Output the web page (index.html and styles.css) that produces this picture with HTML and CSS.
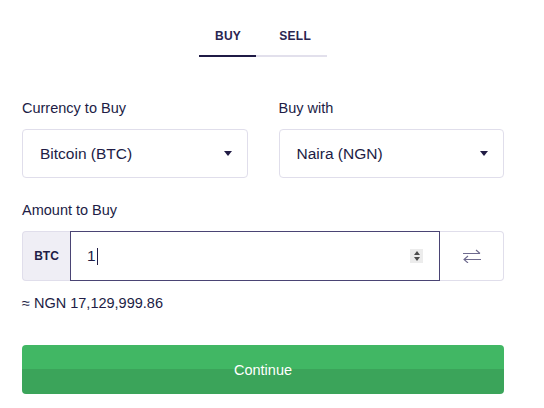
FILE: index.html
```html
<!DOCTYPE html>
<html lang="en">
<head>
  <meta charset="UTF-8">
  <title>Buy / Sell</title>
  <link rel="stylesheet" href="styles.css">
</head>
<body>
  <div class="trade">
    <div class="tabs">
      <span class="tab active">BUY</span>
      <span class="tab">SELL</span>
    </div>

    <div class="row">
      <div class="field">
        <label>Currency to Buy</label>
        <div class="select">
          <span>Bitcoin (BTC)</span>
          <i class="caret"></i>
        </div>
      </div>
      <div class="field">
        <label>Buy with</label>
        <div class="select">
          <span>Naira (NGN)</span>
          <i class="caret"></i>
        </div>
      </div>
    </div>

    <div class="field">
      <label>Amount to Buy</label>
      <div class="amount">
        <span class="addon">BTC</span>
        <div class="amount-input">
          <span class="value">1</span><i class="cursor"></i>
          <span class="spin">
            <i class="up"></i>
            <i class="down"></i>
          </span>
        </div>
        <button class="swap" type="button">
          <svg width="20" height="14" viewBox="0 0 20 14" fill="none" stroke="#6e6a8e" stroke-width="1.1">
            <path d="M1 4.5h17M14 1l4 3.5"/>
            <path d="M19 10.5H2M6 14l-4-3.5L6 7"/>
          </svg>
        </button>
      </div>
    </div>

    <p class="estimate">&asymp; NGN 17,129,999.86</p>

    <button class="continue" type="button">Continue</button>
  </div>
</body>
</html>
```

FILE: styles.css
```css
body {
  margin: 0;
  font-family: "Liberation Sans", Arial, sans-serif;
  color: #211c45;
  background: #fff;
}

.trade {
  width: 482px;
  margin-left: 22px;
  padding-top: 29px;
}

.tabs {
  display: flex;
  justify-content: center;
  margin-bottom: 43px;
}

.tab {
  font-size: 12px;
  font-weight: bold;
  letter-spacing: 0.3px;
  color: #2a2550;
  padding: 0 15px 12px 16px;
  border-bottom: 2px solid #e2e0ec;
}

.tab + .tab {
  padding: 0 16px 12px 23px;
}

.tab.active {
  border-bottom-color: #1f1a45;
}

.row {
  display: flex;
  gap: 31px;
  margin-bottom: 24px;
}

.row .field {
  flex: 1;
}

label {
  display: block;
  font-size: 14.5px;
  margin-bottom: 13px;
}

.select {
  display: flex;
  align-items: center;
  justify-content: space-between;
  height: 47px;
  padding: 0 15px 0 17px;
  border: 1px solid #e0deeb;
  border-radius: 4px;
  font-size: 15.5px;
}

.caret {
  width: 0;
  height: 0;
  border-left: 4.5px solid transparent;
  border-right: 4.5px solid transparent;
  border-top: 5px solid #211c45;
}

.amount {
  display: flex;
  height: 50px;
}

.addon {
  display: flex;
  align-items: center;
  justify-content: center;
  width: 47px;
  background: #efeef5;
  border: 1px solid #e0deeb;
  border-right: none;
  border-radius: 4px 0 0 4px;
  font-size: 12px;
  font-weight: bold;
}

.amount-input {
  flex: 1;
  display: flex;
  align-items: center;
  padding: 0 16px;
  border: 1px solid #4a4474;
  font-size: 15.5px;
}

.cursor {
  width: 1px;
  height: 17px;
  background: #211c45;
  margin-left: 1px;
}

.spin {
  margin-left: auto;
  width: 13px;
  height: 14px;
  background: #ececec;
  display: flex;
  flex-direction: column;
  align-items: center;
  justify-content: center;
  gap: 2px;
}

.spin .up {
  border-left: 3.5px solid transparent;
  border-right: 3.5px solid transparent;
  border-bottom: 4px solid #4d4d4d;
}

.spin .down {
  border-left: 3.5px solid transparent;
  border-right: 3.5px solid transparent;
  border-top: 4px solid #4d4d4d;
}

.swap {
  width: 64px;
  background: #fff;
  border: 1px solid #e0deeb;
  border-left: none;
  border-radius: 0 4px 4px 0;
  display: flex;
  align-items: center;
  justify-content: center;
  padding: 0;
}

.estimate {
  font-size: 14.5px;
  margin: 14px 0 34px;
}

.continue {
  display: block;
  width: 100%;
  height: 49px;
  border: none;
  border-radius: 4px;
  background: linear-gradient(#41b764 50%, #3ba45a 50%);
  color: #fff;
  font-family: "Liberation Sans", Arial, sans-serif;
  font-size: 14.5px;
}
```
